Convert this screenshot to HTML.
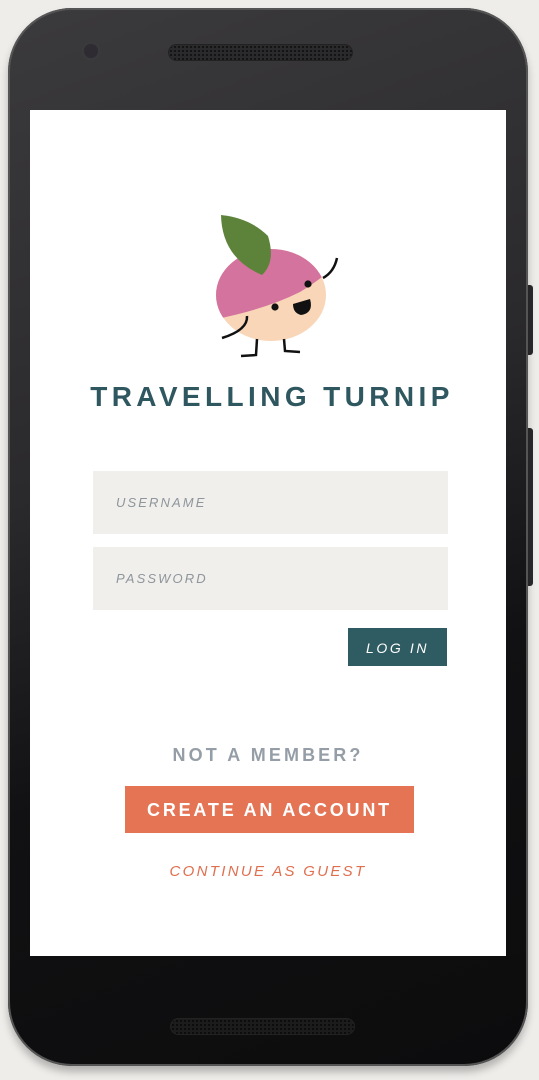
<!DOCTYPE html>
<html><head><meta charset="utf-8">
<style>
html,body{margin:0;padding:0}
body{width:539px;height:1080px;background:#efedea;position:relative;overflow:hidden;font-family:"Liberation Sans",sans-serif}
.phone{position:absolute;left:8px;top:8px;width:520px;height:1058px;border-radius:64px;background:linear-gradient(160deg,#3b3a3c 0%,#2a292b 40%,#111113 65%,#0c0c0d 100%);box-shadow:0 0 0 2px #555 inset,0 6px 8px rgba(0,0,0,0.25)}
.btn1{position:absolute;left:527px;top:285px;width:6px;height:70px;background:#2a2a2c;border-radius:0 3px 3px 0}
.btn2{position:absolute;left:527px;top:428px;width:6px;height:158px;background:#2a2a2c;border-radius:0 3px 3px 0}
.screen{position:absolute;left:30px;top:110px;width:476px;height:846px;background:#fff}
.spk{position:absolute;left:161px;width:183px;height:15px;border-radius:8px;background:radial-gradient(circle,#111 35%,transparent 40%) 0 0/4px 4px,#2a2a2c;box-shadow:0 0 0 1px #222}
.cam{position:absolute;left:76px;top:36px;width:14px;height:14px;border-radius:50%;background:#2e2b33;box-shadow:0 0 0 3px #3a393c}
.title{position:absolute;left:30px;width:476px;top:381px;text-align:center;font-weight:bold;font-size:28px;letter-spacing:4.4px;color:#2f5760;text-indent:8px}
.field{position:absolute;left:93px;width:355px;height:63px;background:#f0efeb;color:#8e959c;font-style:italic;font-size:13px;letter-spacing:2.1px;line-height:63px;text-indent:23px}
.login{position:absolute;left:348px;top:628px;width:99px;height:38px;background:#2f5b62;color:#fff;font-style:italic;font-size:14px;letter-spacing:2.6px;text-align:center;line-height:40px}
.nm{position:absolute;left:30px;width:476px;top:745px;text-align:center;font-weight:bold;font-size:18px;letter-spacing:3.1px;color:#959ea7}
.create{position:absolute;left:125px;top:786px;width:289px;height:47px;background:#e57455;color:#fff;font-weight:bold;font-size:18px;letter-spacing:2.8px;text-align:center;line-height:48px}
.guest{position:absolute;left:30px;width:476px;top:863px;text-align:center;font-style:italic;font-size:15px;letter-spacing:2.3px;color:#e06f50}
</style></head><body>
<div class="btn1"></div><div class="btn2"></div>
<div class="phone">
<div class="cam"></div>
<div class="spk" style="top:37px"></div>
<div class="spk" style="top:1011px;left:163px;background:radial-gradient(circle,#0a0a0a 35%,transparent 40%) 0 0/4px 4px,#1c1c1d"></div>
</div>
<div class="screen"></div>
<svg style="position:absolute;left:0;top:0" width="539" height="400" viewBox="0 0 539 400">
<defs><clipPath id="b"><ellipse cx="271" cy="295" rx="55" ry="46"/></clipPath></defs>
<ellipse cx="271" cy="295" rx="55" ry="46" fill="#f9d6b8"/>
<path clip-path="url(#b)" d="M200 240 L340 240 L340 262 Q320 280 300 292 Q260 312 200 322Z" fill="#d4739e"/>
<path d="M221 215 Q222 258 262 275 Q276 262 268 236 Q250 218 221 215Z" fill="#5d833a"/>
<circle cx="275" cy="307" r="3.6" fill="#111"/>
<circle cx="308" cy="284" r="3.6" fill="#111"/>
<path d="M293 304 L310 299 Q314 313 301 315 Q293 313 293 304Z" fill="#111"/>
<path d="M247 316 Q248 330 222 338" stroke="#111" stroke-width="2.5" fill="none"/>
<path d="M323 278 Q334 272 337 258" stroke="#111" stroke-width="2.5" fill="none"/>
<path d="M257 339 L256 355 L241 356" stroke="#111" stroke-width="2.5" fill="none"/>
<path d="M284 339 L285 351 L300 352" stroke="#111" stroke-width="2.5" fill="none"/>
</svg>
<div class="title">TRAVELLING TURNIP</div>
<div class="field" style="top:471px">USERNAME</div>
<div class="field" style="top:547px">PASSWORD</div>
<div class="login">LOG IN</div>
<div class="nm">NOT A MEMBER?</div>
<div class="create">CREATE AN ACCOUNT</div>
<div class="guest">CONTINUE AS GUEST</div>
</body></html>
